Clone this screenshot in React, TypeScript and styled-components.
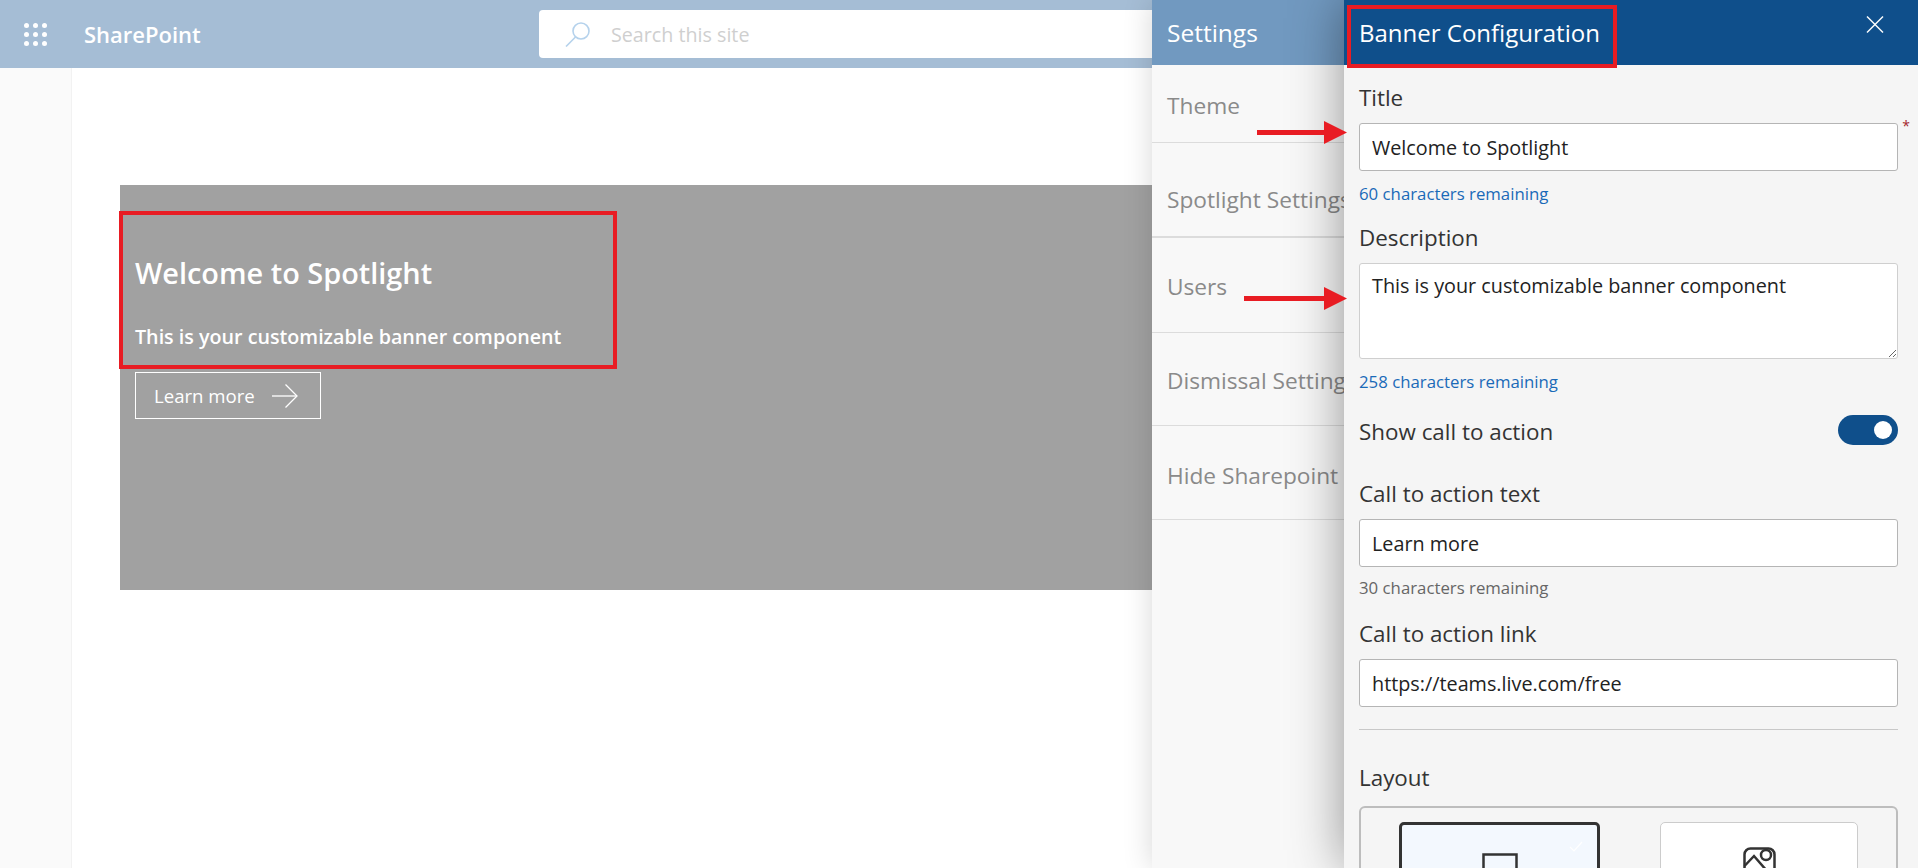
import React from 'react';
import styled, { createGlobalStyle } from 'styled-components';

const GlobalStyle = createGlobalStyle`
  html, body {
    margin: 0;
    padding: 0;
    background: #fff;
    font-family: 'Open Sans', 'Liberation Sans', sans-serif;
  }
`;

const Page = styled.div`
  position: relative;
  width: 1918px;
  height: 868px;
  overflow: hidden;
  background: #fff;
`;

const TopBar = styled.header`
  display: flex;
  align-items: center;
  height: 68px;
  background: #a5bdd5;
`;

const Waffle = styled.div`
  display: grid;
  grid-template-columns: repeat(3, 5px);
  gap: 4px;
  margin-left: 24px;
  margin-right: 37px;
  span {
    width: 5px;
    height: 5px;
    border-radius: 50%;
    background: #fff;
  }
`;

const Brand = styled.div`
  width: 455px;
  color: #fff;
  font-size: 22px;
  font-weight: 600;
`;

const SearchBox = styled.div`
  display: flex;
  align-items: center;
  width: 660px;
  height: 48px;
  border-radius: 4px;
  background: #fff;
  svg {
    margin-left: 26px;
    margin-right: 20px;
  }
  span {
    color: #cfcfcf;
    font-size: 19.7px;
  }
`;

const Body = styled.div`
  display: flex;
  height: 800px;
`;

const Rail = styled.div`
  flex: 0 0 71px;
  background: #fafafa;
  border-right: 1px solid #f2f2f2;
`;

const Main = styled.main`
  flex: 1;
  padding: 117px 0 0 48px;
`;

const Banner = styled.section`
  position: relative;
  width: 1032px;
  height: 405px;
  box-sizing: border-box;
  padding: 65px 0 0 15px;
  background: #a1a1a1;
  color: #fff;
`;

const BannerTitle = styled.h1`
  margin: 0;
  font-size: 28.9px;
  line-height: 46px;
  font-weight: 600;
`;

const BannerText = styled.p`
  margin: 27px 0 0;
  font-size: 19.7px;
  line-height: 28px;
  font-weight: 600;
`;

const LearnButton = styled.div`
  display: flex;
  align-items: center;
  gap: 17px;
  box-sizing: border-box;
  width: 186px;
  height: 47px;
  margin-top: 21px;
  padding-left: 18px;
  border: 1px solid #fff;
  font-size: 18.6px;
`;

const Drawer = styled.div`
  position: absolute;
  top: 0;
  right: 0;
  bottom: 0;
  display: flex;
  width: 766px;
`;

const SettingsPane = styled.aside`
  flex: 0 0 192px;
  min-width: 0;
  background: #f8f8f8;
  box-shadow: 0 0 28px rgba(0, 0, 0, 0.16);
`;

const SettingsHead = styled.div`
  display: flex;
  align-items: center;
  height: 65px;
  padding-left: 15px;
  background: #7199c0;
  color: #fff;
  font-size: 24.5px;
`;

const SettingsRow = styled.div<{ $height: number; $shift: number; $thick?: boolean }>`
  display: flex;
  align-items: center;
  box-sizing: border-box;
  height: ${(p) => p.$height}px;
  padding: ${(p) => p.$shift}px 0 0 15px;
  border-bottom: ${(p) => (p.$thick ? 2 : 1)}px solid #dcdcdc;
  color: #8a8a8a;
  font-size: 22.7px;
  white-space: nowrap;
`;

const ConfigPane = styled.section`
  position: relative;
  z-index: 1;
  flex: 1;
  min-width: 0;
  background: #f5f5f5;
  box-shadow: 0 0 50px rgba(0, 0, 0, 0.42);
`;

const ConfigHead = styled.div`
  display: flex;
  align-items: center;
  justify-content: space-between;
  height: 65px;
  padding: 0 34px 0 15px;
  background: #0f4f8b;
  color: #fff;
  font-size: 24px;
  svg {
    margin-top: -16px;
  }
`;

const ConfigBody = styled.div`
  padding: 0 20px 0 15px;
`;

const Field = styled.div<{ $top: number }>`
  position: relative;
  margin-top: ${(p) => p.$top}px;
`;

const Label = styled.div`
  color: #333;
  font-size: 22.4px;
  line-height: 26px;
`;

const ToggleLabel = styled(Label)`
  padding-top: 3px;
`;

const TextInput = styled.input`
  display: block;
  box-sizing: border-box;
  width: 100%;
  height: 48px;
  margin-top: 12px;
  padding: 0 12px;
  border: 1px solid #b5b5b5;
  border-radius: 3px;
  background: #fff;
  color: #222;
  font-family: inherit;
  font-size: 19.8px;
  outline: none;
`;

const TextArea = styled.textarea`
  display: block;
  box-sizing: border-box;
  width: 100%;
  height: 96px;
  margin-top: 12px;
  padding: 10px 12px;
  border: 1px solid #cfcfcf;
  border-radius: 3px;
  background: #fff;
  color: #222;
  font-family: inherit;
  font-size: 19.8px;
  line-height: 23px;
  outline: none;
`;

const Hint = styled.div<{ $muted?: boolean }>`
  margin-top: ${(p) => (p.$muted ? 10 : 12)}px;
  color: ${(p) => (p.$muted ? '#666' : '#1a6ab8')};
  font-size: 16.8px;
  line-height: 22px;
`;

const Required = styled.span`
  position: absolute;
  top: 34px;
  right: -12px;
  color: #a4262c;
  font-size: 14px;
  line-height: 14px;
`;

const ToggleRow = styled.div`
  display: flex;
  align-items: center;
  justify-content: space-between;
  margin-top: 22px;
`;

const Toggle = styled.div`
  display: flex;
  align-items: center;
  justify-content: flex-end;
  box-sizing: border-box;
  width: 60px;
  height: 30px;
  padding-right: 6px;
  border-radius: 15px;
  background: #0f4f8b;
  span {
    width: 18px;
    height: 18px;
    border-radius: 50%;
    background: #fff;
  }
`;

const Divider = styled.hr`
  height: 1px;
  margin: 22px 0 0;
  border: 0;
  background: #c8c8c8;
`;

const LayoutBox = styled.div`
  display: flex;
  justify-content: space-between;
  box-sizing: border-box;
  height: 200px;
  margin-top: 15px;
  padding: 14px 38px 0;
  border: 2px solid #bdbdbd;
  border-radius: 6px;
`;

const LayoutCard = styled.div<{ $active?: boolean }>`
  position: relative;
  display: flex;
  justify-content: center;
  box-sizing: border-box;
  width: ${(p) => (p.$active ? 201 : 198)}px;
  height: 170px;
  padding-top: ${(p) => (p.$active ? 28 : 24)}px;
  border: ${(p) => (p.$active ? '3px solid #333' : '1px solid #ccc')};
  border-radius: 5px;
  background: ${(p) => (p.$active ? '#f3f8fe' : '#fff')};
`;

const CheckMark = styled.svg`
  position: absolute;
  top: 16px;
  right: 14px;
`;

const RedBox = styled.div<{ $x: number; $y: number; $w: number; $h: number }>`
  position: absolute;
  z-index: 5;
  left: ${(p) => p.$x}px;
  top: ${(p) => p.$y}px;
  box-sizing: border-box;
  width: ${(p) => p.$w}px;
  height: ${(p) => p.$h}px;
  border: 4px solid #e81c23;
`;

const Arrow = styled.svg<{ $x: number; $y: number }>`
  position: absolute;
  z-index: 5;
  left: ${(p) => p.$x}px;
  top: ${(p) => p.$y}px;
`;

function RedArrow({ x, y, width }: { x: number; y: number; width: number }) {
  return (
    <Arrow $x={x} $y={y} width={width} height={23} viewBox={`0 0 ${width} 23`}>
      <rect x={0} y={9} width={width - 20} height={5} fill='#e81c23' />
      <polygon points={`${width - 23},0 ${width},11.5 ${width - 23},23`} fill='#e81c23' />
    </Arrow>
  );
}

const settingsItems = [
  { label: 'Theme', height: 78, shift: 4 },
  { label: 'Spotlight Settings', height: 95, shift: 20, thick: true },
  { label: 'Users', height: 95, shift: 2 },
  { label: 'Dismissal Settings', height: 93, shift: 3 },
  { label: 'Hide Sharepoint', height: 94, shift: 6 },
];

export default function App() {
  return (
    <Page>
      <GlobalStyle />
      <TopBar>
        <Waffle>
          {Array.from({ length: 9 }).map((_, i) => (
            <span key={i} />
          ))}
        </Waffle>
        <Brand>SharePoint</Brand>
        <SearchBox>
          <svg width='26' height='25' viewBox='0 0 26 25' fill='none' stroke='#b5d2ec' strokeWidth='1.6'>
            <circle cx='16' cy='9' r='8' />
            <line x1='10.5' y1='15' x2='1' y2='24.5' />
          </svg>
          <span>Search this site</span>
        </SearchBox>
      </TopBar>
      <Body>
        <Rail />
        <Main>
          <Banner>
            <BannerTitle>Welcome to Spotlight</BannerTitle>
            <BannerText>This is your customizable banner component</BannerText>
            <LearnButton>
              Learn more
              <svg width='26' height='24' viewBox='0 0 26 24' fill='none' stroke='#fff' strokeWidth='1.3'>
                <line x1='0' y1='12' x2='25' y2='12' />
                <polyline points='13.5,0.5 25,12 13.5,23.5' />
              </svg>
            </LearnButton>
          </Banner>
        </Main>
      </Body>
      <Drawer>
        <SettingsPane>
          <SettingsHead>Settings</SettingsHead>
          {settingsItems.map((item) => (
            <SettingsRow key={item.label} $height={item.height} $shift={item.shift} $thick={item.thick}>
              {item.label}
            </SettingsRow>
          ))}
        </SettingsPane>
        <ConfigPane>
          <ConfigHead>
            Banner Configuration
            <svg width='18' height='17' viewBox='0 0 18 17' stroke='#fff' strokeWidth='1.4'>
              <line x1='1' y1='0.5' x2='17' y2='16.5' />
              <line x1='17' y1='0.5' x2='1' y2='16.5' />
            </svg>
          </ConfigHead>
          <ConfigBody>
            <Field $top={20}>
              <Label>Title</Label>
              <Required>*</Required>
              <TextInput readOnly value='Welcome to Spotlight' />
              <Hint>60 characters remaining</Hint>
            </Field>
            <Field $top={20}>
              <Label>Description</Label>
              <TextArea readOnly value='This is your customizable banner component' />
              <Hint>258 characters remaining</Hint>
            </Field>
            <ToggleRow>
              <ToggleLabel>Show call to action</ToggleLabel>
              <Toggle>
                <span />
              </Toggle>
            </ToggleRow>
            <Field $top={36}>
              <Label>Call to action text</Label>
              <TextInput readOnly value='Learn more' />
              <Hint $muted>30 characters remaining</Hint>
            </Field>
            <Field $top={22}>
              <Label>Call to action link</Label>
              <TextInput readOnly value='https://teams.live.com/free' />
            </Field>
            <Divider />
            <Field $top={35}>
              <Label>Layout</Label>
              <LayoutBox>
                <LayoutCard $active>
                  <CheckMark width='14' height='11' viewBox='0 0 14 11' fill='none' stroke='#fff' strokeWidth='1.2'>
                    <polyline points='1,6 5,10 13,1' />
                  </CheckMark>
                  <svg width='36' height='50' viewBox='0 0 36 50' fill='none' stroke='#333' strokeWidth='2.5'>
                    <rect x='1.5' y='1.5' width='33' height='47' />
                  </svg>
                </LayoutCard>
                <LayoutCard>
                  <svg width='33' height='50' viewBox='0 0 33 50' fill='none' stroke='#333' strokeWidth='2.5'>
                    <rect x='1.5' y='1.5' width='30' height='47' rx='6' />
                    <circle cx='23' cy='8' r='5' />
                    <polyline points='1.5,19 11,9 24,24' />
                  </svg>
                </LayoutCard>
              </LayoutBox>
            </Field>
          </ConfigBody>
        </ConfigPane>
      </Drawer>
      <RedBox $x={119} $y={211} $w={498} $h={158} />
      <RedBox $x={1347} $y={5} $w={270} $h={63} />
      <RedArrow x={1257} y={121} width={90} />
      <RedArrow x={1244} y={287} width={103} />
    </Page>
  );
}
